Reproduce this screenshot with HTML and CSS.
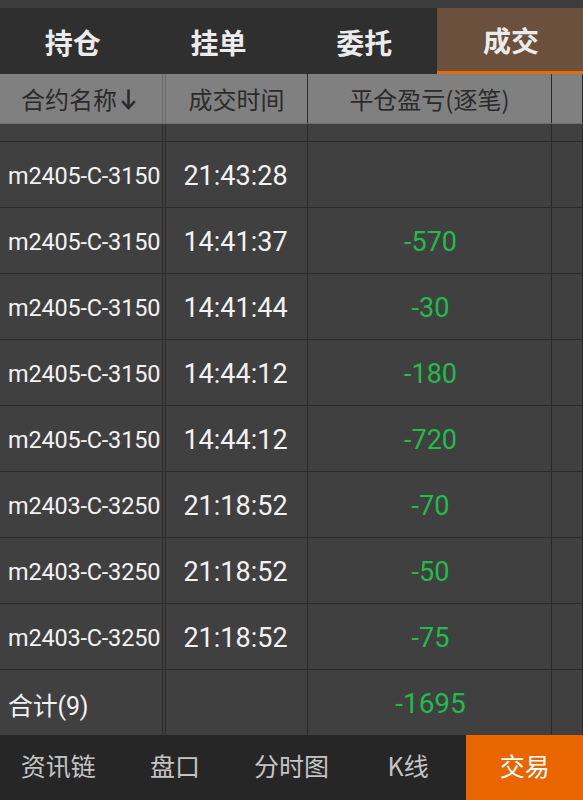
FILE: index.html
```html
<!DOCTYPE html>
<html lang="zh-CN">
<head>
  <meta charset="UTF-8" />
  <meta name="viewport" content="width=device-width, initial-scale=1.0"/>
  <title>成交</title>
  <link rel="stylesheet" href="styles.css">
</head>
<body>
  <div class="topband"></div>

  <div class="tabs">
    <div class="tab">持仓</div>
    <div class="tab">挂单</div>
    <div class="tab">委托</div>
    <div class="tab active">成交</div>
  </div>

  <div class="table">
    <div class="row head">
      <div class="cell first center">合约名称
        <svg class="arrow" width="17" height="24" viewBox="0 0 16 22">
          <path d="M8 2 V19 M2 13 L8 19.5 L14 13" fill="none" stroke="#2b2b2b" stroke-width="2.4"/>
        </svg>
      </div>
      <div class="cell">成交时间</div>
      <div class="cell">平仓盈亏(逐笔)</div>
      <div class="cell"></div>
    </div>

    <div class="row partial">
      <div class="cell first"></div>
      <div class="cell"></div>
      <div class="cell"></div>
      <div class="cell"></div>
    </div>

    <div id="rows"></div>

    <div class="row total">
      <div class="cell first name">合计(9)</div>
      <div class="cell"></div>
      <div class="cell pl">-1695</div>
      <div class="cell"></div>
    </div>
  </div>

  <div class="nav">
    <div class="nav-item">资讯链</div>
    <div class="nav-item">盘口</div>
    <div class="nav-item">分时图</div>
    <div class="nav-item">K线</div>
    <div class="nav-item active">交易</div>
  </div>

  <script>
    const TRADES = [
      ["m2405-C-3150", "21:43:28", ""],
      ["m2405-C-3150", "14:41:37", "-570"],
      ["m2405-C-3150", "14:41:44", "-30"],
      ["m2405-C-3150", "14:44:12", "-180"],
      ["m2405-C-3150", "14:44:12", "-720"],
      ["m2403-C-3250", "21:18:52", "-70"],
      ["m2403-C-3250", "21:18:52", "-50"],
      ["m2403-C-3250", "21:18:52", "-75"]
    ];

    const ROWS = document.getElementById("rows");

    TRADES.forEach(t => {
      const row = document.createElement("div");
      row.className = "row";
      row.innerHTML =
        '<div class="cell first name">' + t[0] + '</div>' +
        '<div class="cell time">' + t[1] + '</div>' +
        '<div class="cell pl">' + t[2] + '</div>' +
        '<div class="cell"></div>';
      ROWS.appendChild(row);
    });
  </script>
</body>
</html>
```

FILE: styles.css
```css
body {
  margin: 0;
  background: #404040;
  color: #f2f2f2;
  font-family: Roboto, "Noto Sans CJK SC", sans-serif;
  height: 800px;
  overflow: hidden;
}

.topband {
  height: 8px;
  background: #3c3c3c;
}

.tabs {
  display: grid;
  grid-template-columns: repeat(4, 1fr);
  height: 66px;
  background: #2f2f2f;
}

.tab {
  display: flex;
  align-items: center;
  justify-content: center;
  font-family: "Noto Sans CJK SC", sans-serif;
  font-size: 28px;
  font-weight: bold;
  color: #ebebeb;
  padding-top: 2px;
}

.tab.active {
  background: #6a503d;
  border-bottom: 3px solid #e96a0c;
  padding-top: 0;
  padding-left: 2px;
}

.row {
  display: grid;
  grid-template-columns: 166px 142px 244px 1fr;
  height: 65px;
  border-bottom: 1px solid #2b2b2b;
}

.cell {
  display: flex;
  align-items: center;
  justify-content: center;
  border-right: 1px solid #2b2b2b;
  padding-top: 2px;
}

.cell.first {
  border-right: 4px double #2b2b2b;
}

.row.head {
  height: 49px;
  background: #808080;
  border-bottom: 1px solid #6e6e6e;
  color: #2b2b2b;
  font-family: "Noto Sans CJK SC", sans-serif;
  font-size: 24px;
}

.row.head .cell {
  padding-top: 0;
}

.row.head .cell.first {
  border-right-color: #6a6a6a;
  padding-right: 4px;
}

.arrow {
  margin-left: 3px;
  margin-top: 1px;
}

.row.partial {
  height: 17px;
}

.name {
  justify-content: flex-start;
  padding-left: 8px;
  font-size: 23.5px;
  letter-spacing: -0.2px;
}

.time {
  font-size: 27px;
  padding-right: 2px;
}

.pl {
  color: #22bb4c;
  font-size: 27px;
  padding-left: 2px;
}

.row.total {
  border-bottom: none;
}

.row.total .name {
  font-size: 25px;
}

.row.total .pl {
  font-size: 28px;
}

.nav {
  display: grid;
  grid-template-columns: repeat(5, 1fr);
  height: 65px;
  background: #262626;
}

.nav-item {
  display: flex;
  align-items: center;
  justify-content: center;
  font-family: "Noto Sans CJK SC", sans-serif;
  font-size: 25px;
  color: #c4c4c4;
  padding-bottom: 6px;
}

.nav-item.active {
  background: #e86500;
  color: #ffffff;
}
```
